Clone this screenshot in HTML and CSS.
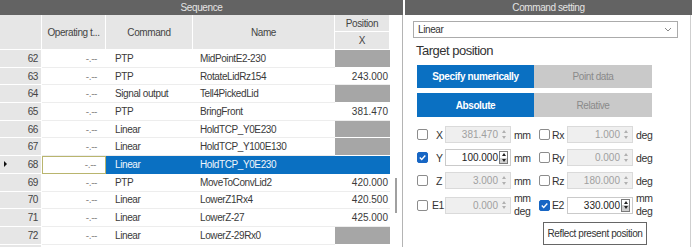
FILE: index.html
```html
<!DOCTYPE html>
<html>
<head>
<meta charset="utf-8">
<link rel="stylesheet" href="styles.css">
</head>
<body>
<div class="app">
  <section class="seq">
    <div class="title">Sequence</div>
    <div class="seq-body">
      <div class="table">
        <div class="thead">
          <div class="th th-num"></div>
          <div class="th th-op">Operating t...</div>
          <div class="th th-cmd">Command</div>
          <div class="th th-name">Name</div>
          <div class="th th-pos">Position</div>
          <div class="th th-x">X</div>
        </div>
        <div class="row"><div class="c num">62</div><div class="c op">-.--</div><div class="c cmd">PTP</div><div class="c name">MidPointE2-230</div><div class="c pos empty"></div></div>
        <div class="row"><div class="c num">63</div><div class="c op">-.--</div><div class="c cmd">PTP</div><div class="c name">RotateLidRz154</div><div class="c pos">243.000</div></div>
        <div class="row"><div class="c num">64</div><div class="c op">-.--</div><div class="c cmd">Signal output</div><div class="c name">Tell4PickedLid</div><div class="c pos empty"></div></div>
        <div class="row"><div class="c num">65</div><div class="c op">-.--</div><div class="c cmd">PTP</div><div class="c name">BringFront</div><div class="c pos">381.470</div></div>
        <div class="row"><div class="c num">66</div><div class="c op">-.--</div><div class="c cmd">Linear</div><div class="c name">HoldTCP_Y0E230</div><div class="c pos empty"></div></div>
        <div class="row"><div class="c num">67</div><div class="c op">-.--</div><div class="c cmd">Linear</div><div class="c name">HoldTCP_Y100E130</div><div class="c pos empty"></div></div>
        <div class="row sel"><div class="c num"><span class="marker"></span>68</div><div class="c op focus">-.--</div><div class="c cmd">Linear</div><div class="c name">HoldTCP_Y0E230</div><div class="c pos"></div></div>
        <div class="row"><div class="c num">69</div><div class="c op">-.--</div><div class="c cmd">PTP</div><div class="c name">MoveToConvLid2</div><div class="c pos">420.000</div></div>
        <div class="row"><div class="c num">70</div><div class="c op">-.--</div><div class="c cmd">Linear</div><div class="c name">LowerZ1Rx4</div><div class="c pos">420.500</div></div>
        <div class="row"><div class="c num">71</div><div class="c op">-.--</div><div class="c cmd">Linear</div><div class="c name">LowerZ-27</div><div class="c pos">425.000</div></div>
        <div class="row"><div class="c num">72</div><div class="c op">-.--</div><div class="c cmd">Linear</div><div class="c name">LowerZ-29Rx0</div><div class="c pos empty"></div></div>
        <div class="row"><div class="c num"></div><div class="c op"></div><div class="c cmd"></div><div class="c name"></div><div class="c pos"></div></div>
      </div>
      <div class="vscroll"><div class="thumb"></div></div>
    </div>
  </section>

  <section class="cmdset">
    <div class="title">Command setting</div>
    <div class="cmd-body">
      <div class="select">
        <span>Linear</span>
        <svg width="8" height="5" viewBox="0 0 8 5"><path d="M1 1 L4 4 L7 1" fill="none" stroke="#888" stroke-width="1"/></svg>
      </div>
      <div class="heading">Target position</div>
      <div class="seg">
        <div class="seg-btn on">Specify numerically</div>
        <div class="seg-btn">Point data</div>
      </div>
      <div class="seg seg2">
        <div class="seg-btn on">Absolute</div>
        <div class="seg-btn">Relative</div>
      </div>

      <div class="frow">
        <span class="cb"></span><span></span><span class="lbl">X</span>
        <div class="num-in dis"><span class="val">381.470</span><span class="spin"><i class="up"></i><i class="dn"></i></span></div>
        <span class="unit">mm</span>
        <span class="cb"></span><span class="lbl lbl2">Rx</span>
        <div class="num-in dis"><span class="val">1.000</span><span class="spin"><i class="up"></i><i class="dn"></i></span></div>
        <span class="unit">deg</span>
      </div>
      <div class="frow">
        <span class="cb on"><svg width="9" height="9" viewBox="0 0 9 9"><path d="M1.8 4.6 L3.7 6.4 L7.3 2.5" fill="none" stroke="#fff" stroke-width="1.4"/></svg></span><span></span><span class="lbl">Y</span>
        <div class="num-in"><span class="val">100.000</span><span class="spin"><i class="up"></i><i class="dn"></i></span></div>
        <span class="unit">mm</span>
        <span class="cb"></span><span class="lbl lbl2">Ry</span>
        <div class="num-in dis"><span class="val">0.000</span><span class="spin"><i class="up"></i><i class="dn"></i></span></div>
        <span class="unit">deg</span>
      </div>
      <div class="frow">
        <span class="cb"></span><span></span><span class="lbl">Z</span>
        <div class="num-in dis"><span class="val">3.000</span><span class="spin"><i class="up"></i><i class="dn"></i></span></div>
        <span class="unit">mm</span>
        <span class="cb"></span><span class="lbl lbl2">Rz</span>
        <div class="num-in dis"><span class="val">180.000</span><span class="spin"><i class="up"></i><i class="dn"></i></span></div>
        <span class="unit">deg</span>
      </div>
      <div class="frow frow-e">
        <span class="cb"></span><span class="lbl lbl-e">E1</span>
        <div class="num-in dis"><span class="val">0.000</span><span class="spin"><i class="up"></i><i class="dn"></i></span></div>
        <span class="unit unit2">mm<br>deg</span>
        <span class="cb on"><svg width="9" height="9" viewBox="0 0 9 9"><path d="M1.8 4.6 L3.7 6.4 L7.3 2.5" fill="none" stroke="#fff" stroke-width="1.4"/></svg></span><span class="lbl lbl2">E2</span>
        <div class="num-in"><span class="val">330.000</span><span class="spin"><i class="up"></i><i class="dn"></i></span></div>
        <span class="unit unit2">mm<br>deg</span>
      </div>
      <div class="reflect">Reflect present position</div>
    </div>
  </section>
</div>
</body>
</html>
```

FILE: styles.css
```css
* { box-sizing: border-box; margin: 0; padding: 0; }

body {
  font-family: "Liberation Sans", Arial, sans-serif;
  font-size: 10px;
  letter-spacing: -0.4px;
  color: #333;
  background: #fff;
  width: 694px;
  height: 247px;
  overflow: hidden;
}

.app {
  display: flex;
  height: 247px;
}

.title {
  height: 15px;
  line-height: 15px;
  background: #636363;
  color: #e4e4e4;
  text-align: center;
  font-size: 10px;
}

/* ---------- Sequence ---------- */
.seq {
  width: 403px;
  display: flex;
  flex-direction: column;
}

.seq-body {
  display: flex;
  flex: 1;
  overflow: hidden;
}

.table {
  width: 390px;
}

.thead {
  display: grid;
  grid-template-columns: 42px 64px 87px 142px 55px;
  grid-template-rows: 17px 18px;
  height: 35px;
}

.th {
  background: #e6e6e6;
  border-right: 1px solid #fff;
  border-bottom: 1px solid #fff;
  color: #444;
  display: flex;
  align-items: center;
  justify-content: center;
}

.th-num, .th-op, .th-cmd, .th-name { grid-row: 1 / 3; }
.th-pos { grid-column: 5; grid-row: 1; }
.th-x { grid-column: 5; grid-row: 2; }

.row {
  display: grid;
  grid-template-columns: 42px 64px 87px 142px 55px;
  height: 17.7px;
}

.c {
  display: flex;
  align-items: center;
  border-bottom: 1px solid #ededed;
  white-space: nowrap;
  overflow: hidden;
  color: #3a3a3a;
}

.c.num {
  background: #e6e6e6;
  border-bottom: 1px solid #fff;
  border-right: 1px solid #fff;
  justify-content: flex-end;
  padding-right: 3px;
  color: #444;
}

.c.op {
  justify-content: flex-end;
  padding-right: 9px;
  color: #8a8a8a;
}

.c.cmd { padding-left: 9px; }
.c.name { padding-left: 7px; }

.c.pos {
  justify-content: flex-end;
  padding-right: 2px;
  letter-spacing: 0;
}

.c.pos.empty {
  background: #a6a6a6;
  border-bottom: 1px solid #fff;
}

.row.sel .cmd,
.row.sel .name,
.row.sel .pos {
  background: #0a70c2;
  color: #f0f6fc;
  border-bottom-color: #0a70c2;
}

.row.sel .op.focus {
  border: 1px solid #b9b56e;
}

.row.sel .num {
  justify-content: space-between;
  padding-left: 4px;
}

.marker {
  width: 0;
  height: 0;
  border-top: 3px solid transparent;
  border-bottom: 3px solid transparent;
  border-left: 3px solid #111;
}

.vscroll {
  width: 13px;
  border-right: 1px solid #b4b4b4;
  padding-left: 5px;
  padding-top: 163px;
}

.thumb {
  width: 2px;
  height: 35px;
  background: #a0a0a0;
}

/* ---------- Command setting ---------- */
.cmdset {
  width: 287px;
  margin-left: 2px;
  display: flex;
  flex-direction: column;
}

.cmd-body {
  flex: 1;
  width: 286px;
  border-right: 1px solid #cfcfcf;
  padding-left: 8px;
}

.select {
  margin-top: 6px;
  width: 265px;
  height: 17px;
  border: 1px solid #ababab;
  display: flex;
  align-items: center;
  justify-content: space-between;
  padding: 0 5px 0 4px;
  color: #333;
}

.heading {
  margin-top: 4px;
  font-size: 13px;
  letter-spacing: -0.5px;
  line-height: 18px;
  height: 18px;
  color: #333;
  padding-left: 3px;
}

.seg {
  margin-top: 5px;
  margin-left: 4px;
  display: flex;
  height: 23px;
}

.seg2 {
  height: 24px;
}

.seg-btn {
  width: 117px;
  display: flex;
  align-items: center;
  justify-content: center;
  background: #c9c9c9;
  color: #8a8a8a;
}

.seg-btn + .seg-btn { width: 118px; }

.seg-btn.on {
  background: #0a70c2;
  color: #fff;
  font-weight: bold;
}

.frow {
  margin-left: 4px;
  margin-top: 6px;
  display: grid;
  grid-template-columns: 11px 8px 9px 66px 28px 11px 17px 66px 30px;
  align-items: center;
  height: 17px;
}

.frow:first-of-type { margin-top: 9px; }

.seg2 + .frow { margin-top: 9px; }

.frow-e {
  margin-top: 3px;
  height: 26px;
  grid-template-columns: 11px 17px 66px 28px 11px 17px 66px 30px;
}

.cb {
  width: 11px;
  height: 11px;
  border: 1px solid #8c8c8c;
  border-radius: 2px;
  background: #fff;
  display: flex;
  align-items: center;
  justify-content: center;
}

.cb.on {
  background: #1766c4;
  border-color: #1766c4;
}

.lbl {
  font-size: 10.5px;
  color: #333;
}

.lbl2 { padding-left: 2px; }
.lbl-e { padding-left: 4px; }

.num-in {
  height: 17px;
  border: 1px solid #cacaca;
  background: #fff;
  display: flex;
  align-items: center;
  justify-content: flex-end;
  padding-right: 2px;
  color: #222;
  letter-spacing: 0;
}

.num-in.dis {
  background: #efefef;
  border-color: #dadada;
  color: #a0a0a0;
}

.val { padding-right: 1px; }

.spin {
  width: 9px;
  height: 13px;
  display: flex;
  flex-direction: column;
  border: 1px solid #7a7a7a;
}

.spin i {
  flex: 1;
  display: flex;
  align-items: center;
  justify-content: center;
}

.spin i.dn { background: #d0d0d0; }

.spin i::after {
  content: "";
  width: 0;
  height: 0;
  border-left: 2px solid transparent;
  border-right: 2px solid transparent;
}

.spin i.up::after { border-bottom: 3px solid #222; }
.spin i.dn::after { border-top: 3px solid #222; }

.dis .spin { border-color: transparent; }
.dis .spin i.dn { background: transparent; }
.dis .spin i.up::after { border-bottom-color: #b0b0b0; }
.dis .spin i.dn::after { border-top-color: #b0b0b0; }

.unit {
  padding-left: 3px;
  font-size: 10.5px;
  color: #333;
}

.unit2 {
  line-height: 13px;
}

.reflect {
  margin-top: 4px;
  margin-left: 130px;
  width: 104px;
  height: 23px;
  border: 1px solid #666;
  display: flex;
  align-items: center;
  justify-content: center;
  color: #333;
  white-space: nowrap;
}
```
